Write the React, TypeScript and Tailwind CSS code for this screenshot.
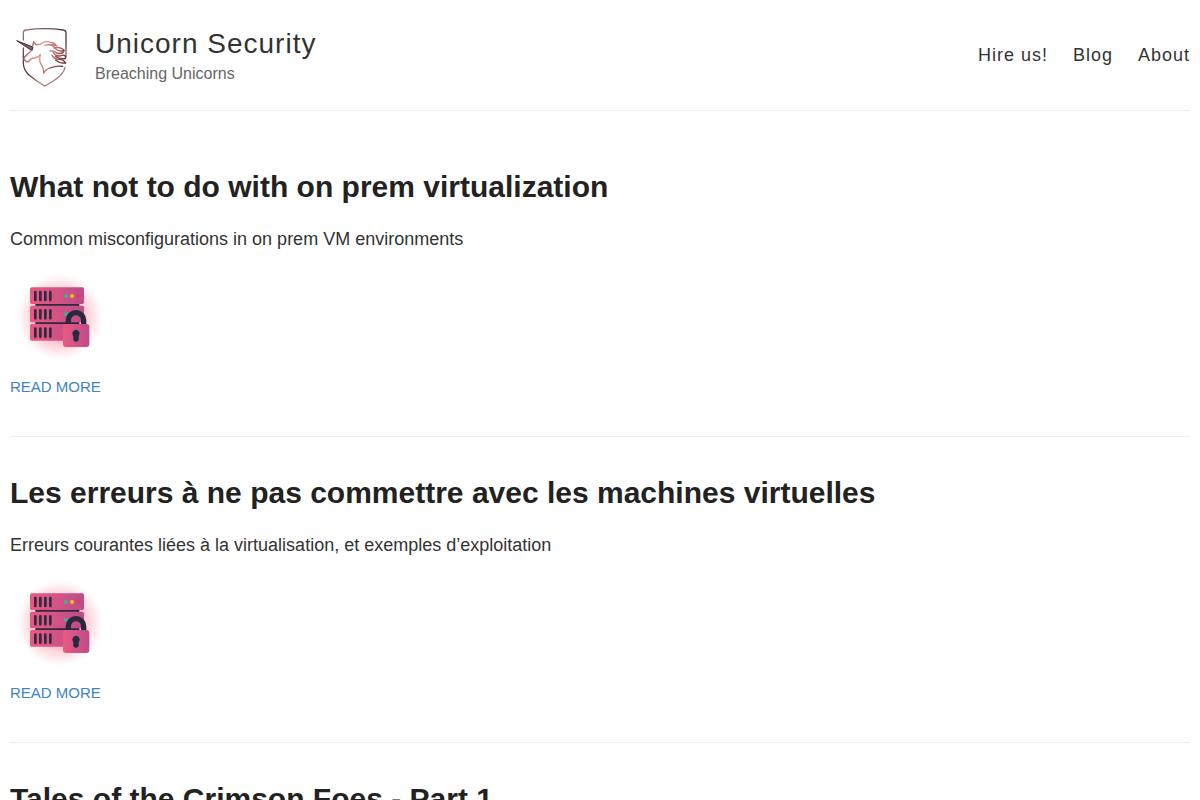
import React from 'react';

const navLinks = [
  { label: 'Hire us!', href: '#hire' },
  { label: 'Blog', href: '#blog' },
  { label: 'About', href: '#about' }
];

const posts = [
  {
    slug: 'on-prem-virtualization',
    title: 'What not to do with on prem virtualization',
    excerpt: 'Common misconfigurations in on prem VM environments'
  },
  {
    slug: 'machines-virtuelles',
    title: 'Les erreurs à ne pas commettre avec les machines virtuelles',
    excerpt: 'Erreurs courantes liées à la virtualisation, et exemples d’exploitation'
  },
  {
    slug: 'crimson-foes-1',
    title: 'Tales of the Crimson Foes - Part 1',
    excerpt: 'A red team story'
  }
];

const UnicornLogo: React.FC = () => (
  <svg viewBox="0 0 210 210" className="size-[70px] shrink-0" fill="none" aria-hidden="true">
    <defs>
      <linearGradient id="shield" x1="30" y1="30" x2="170" y2="190" gradientUnits="userSpaceOnUse">
        <stop offset="0" stopColor="#a08088" />
        <stop offset="0.3" stopColor="#6a4550" />
        <stop offset="0.55" stopColor="#4f3038" />
        <stop offset="0.75" stopColor="#b98580" />
        <stop offset="1" stopColor="#8a5c62" />
      </linearGradient>
      <linearGradient id="mane" x1="40" y1="70" x2="168" y2="130" gradientUnits="userSpaceOnUse">
        <stop offset="0" stopColor="#7a4650" />
        <stop offset="0.4" stopColor="#dd9c92" />
        <stop offset="0.7" stopColor="#b86a64" />
        <stop offset="1" stopColor="#4a2a33" />
      </linearGradient>
    </defs>
    <g stroke="url(#shield)" strokeWidth="4" strokeLinecap="round" strokeLinejoin="round">
      <path d="M40 60V38Q40 31 48 30Q103 22 160 30Q168 31 168 39V112" />
      <path d="M40 84V132Q42 151 56 164Q76 181 104 198Q140 179 154 163Q163 153 165 142" />
    </g>
    <path d="M20 62L66 92L69 81Z" fill="#8a6068" stroke="#4d2c36" strokeWidth="3" strokeLinejoin="round" />
    <g stroke="url(#mane)" strokeWidth="4" strokeLinecap="round" strokeLinejoin="round">
      <path d="M68 78L71 65L77 74Q90 75 98 68Q108 62 122 67Q135 69 140 78Q127 72 114 74" />
      <path d="M64 92Q59 98 54 101L43 112Q40 119 46 121Q50 128 57 124Q62 114 73 114Q86 113 91 104" />
      <path d="M91 104Q86 124 94 134Q101 144 101 160Q104 150 119 144Q138 137 158 139" />
      <path d="M104 76Q126 70 135 84Q143 96 162 92Q158 104 140 99Q132 91 120 93" />
      <path d="M132 84Q150 79 162 90" />
      <path d="M130 98Q137 109 150 108Q159 103 165 107Q168 112 166 116Q149 118 136 109" />
      <path d="M126 106Q134 118 148 118Q160 118 167 129Q149 131 137 120" />
    </g>
  </svg>
);

const ServerLock: React.FC = () => (
  <svg viewBox="0 0 300 300" className="size-[100px]" role="img" aria-label="Unlocked servers">
    <defs>
      <radialGradient id="glow">
        <stop offset="0" stopColor="#ff5b76" stopOpacity="0.7" />
        <stop offset="0.5" stopColor="#ff6f86" stopOpacity="0.5" />
        <stop offset="0.8" stopColor="#ff9aaa" stopOpacity="0.24" />
        <stop offset="1" stopColor="#ffc0cb" stopOpacity="0" />
      </radialGradient>
      <linearGradient id="rack" x1="0" y1="0" x2="1" y2="0">
        <stop offset="0" stopColor="#e85a80" />
        <stop offset="1" stopColor="#bd4c88" />
      </linearGradient>
    </defs>
    <circle cx="150" cy="156" r="130" fill="url(#glow)" />
    <path d="M76 120H208M76 174H208" stroke="#30283f" strokeWidth="7" />
    {[67, 122, 177].map((y) => (
      <g key={y}>
        <rect x="60" y={y} width="162" height="50" rx="5" fill="url(#rack)" />
        <path
          d={`M76 ${y + 14}v24M91 ${y + 14}v24M106 ${y + 14}v24M121 ${y + 14}v24`}
          stroke="#302a40"
          strokeWidth="8"
          strokeLinecap="round"
        />
      </g>
    ))}
    <circle cx="168" cy="93" r="6" fill="#3fb489" />
    <circle cx="186" cy="93" r="6" fill="#f8bd2c" />
    <circle cx="205" cy="93" r="6" fill="#dc3f58" />
    <circle cx="168" cy="147" r="6" fill="#3fb489" />
    <path d="M175 176V166A23 23 0 0 1 221 166V178" fill="none" stroke="#29293d" strokeWidth="16" />
    <rect x="159" y="177" width="79" height="69" rx="9" fill="url(#rack)" />
    <path d="M198 194A12 12 0 0 0 190 214V222A8 8 0 0 0 206 222V214A12 12 0 0 0 198 194Z" fill="#29293d" />
  </svg>
);

const App: React.FC = () => {
  return (
    <div className="min-h-screen bg-white px-[10px] font-['Liberation_Sans',Arial,sans-serif] text-lg text-[#333]">
      <header className="flex items-center justify-between border-b border-[#eee] py-5">
        <div className="flex items-center gap-[15px]">
          <a href="#home" aria-label="Unicorn Security home">
            <UnicornLogo />
          </a>
          <div className="pt-[6px]">
            <h1 className="text-[28px] leading-8 tracking-[1px]">
              <a href="#home">Unicorn Security</a>
            </h1>
            <p className="text-base leading-7 text-[#666]">Breaching Unicorns</p>
          </div>
        </div>
        <nav className="flex gap-[25px] tracking-[1px]">
          {navLinks.map((link) => (
            <a key={link.label} href={link.href}>
              {link.label}
            </a>
          ))}
        </nav>
      </header>

      <main className="pt-5">
        {posts.map((post) => (
          <article key={post.slug} className="border-b border-[#eee] pt-[38px] pb-9">
            <h2 className="text-3xl leading-9 font-bold text-[#222]">
              <a href={`#${post.slug}`}>{post.title}</a>
            </h2>
            <p className="mt-5 leading-7">{post.excerpt}</p>
            <div className="mt-3">
              <ServerLock />
            </div>
            <a href={`#${post.slug}`} className="mt-[10px] inline-block text-[15px] leading-6 text-[#4183c4] uppercase">
              Read more
            </a>
          </article>
        ))}
      </main>
    </div>
  );
};

export default App;
